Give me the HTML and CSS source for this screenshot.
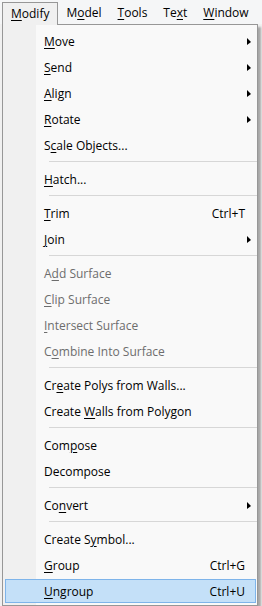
FILE: index.html
```html
<!DOCTYPE html>
<html>

<head>
  <meta charset="UTF-8">
  <meta name="viewport" content="width=device-width, initial-scale=1.0">
  <title>Modify menu</title>

  <link rel="stylesheet" href="styles.css">
</head>

<body>
  <div class="menubar">
    <div class="top open"><u>M</u>odify</div>
    <div class="top">M<u>o</u>del</div>
    <div class="top"><u>T</u>ools</div>
    <div class="top">Te<u>x</u>t</div>
    <div class="top"><u>W</u>indow</div>
  </div>

  <div class="menu">
    <div class="item"><span class="label"><u>M</u>ove</span><span class="arrow"></span></div>
    <div class="item"><span class="label"><u>S</u>end</span><span class="arrow"></span></div>
    <div class="item"><span class="label"><u>A</u>lign</span><span class="arrow"></span></div>
    <div class="item"><span class="label"><u>R</u>otate</span><span class="arrow"></span></div>
    <div class="item"><span class="label">S<u>c</u>ale Objects...</span></div>
    <div class="sep"></div>
    <div class="item"><span class="label"><u>H</u>atch...</span></div>
    <div class="sep"></div>
    <div class="item"><span class="label"><u>T</u>rim</span><span class="key">Ctrl+T</span></div>
    <div class="item"><span class="label"><u>J</u>oin</span><span class="arrow"></span></div>
    <div class="sep"></div>
    <div class="item off"><span class="label">A<u>d</u>d Surface</span></div>
    <div class="item off"><span class="label"><u>C</u>lip Surface</span></div>
    <div class="item off"><span class="label"><u>I</u>ntersect Surface</span></div>
    <div class="item off"><span class="label">C<u>o</u>mbine Into Surface</span></div>
    <div class="sep"></div>
    <div class="item"><span class="label">Cr<u>e</u>ate Polys from Walls...</span></div>
    <div class="item"><span class="label">Create <u>W</u>alls from Polygon</span></div>
    <div class="sep"></div>
    <div class="item"><span class="label">Com<u>p</u>ose</span></div>
    <div class="item"><span class="label">Decompose</span></div>
    <div class="sep"></div>
    <div class="item"><span class="label">Co<u>n</u>vert</span><span class="arrow"></span></div>
    <div class="sep"></div>
    <div class="item"><span class="label">Create S<u>y</u>mbol...</span></div>
    <div class="item"><span class="label"><u>G</u>roup</span><span class="key">Ctrl+G</span></div>
    <div class="item hot"><span class="label"><u>U</u>ngroup</span><span class="key">Ctrl+U</span></div>
  </div>
</body>

</html>
```

FILE: styles.css
```css
* {
  box-sizing: border-box;
}

body {
  margin: 0;
  font-family: "Open Sans", "Noto Sans", sans-serif;
  font-size: 12px;
  color: #000;
  background: #f0f0f0;
  overflow: hidden;
}

u {
  text-decoration-thickness: 1px;
  text-underline-offset: 2px;
}

.menubar {
  display: flex;
  height: 24px;
  padding: 2px 0 0 2px;
  background: #f5f6f7;
}

.top {
  height: 22px;
  line-height: 22px;
  padding: 0 8px;
}

.top.open {
  position: relative;
  z-index: 2;
  height: 23px;
  border: 1px solid #979797;
  border-bottom: none;
  background: #f0f0f0;
}

.menu {
  position: relative;
  display: flex;
  flex-direction: column;
  width: 256px;
  margin-left: 2px;
  padding: 3px 0 1px;
  border: 1px solid #979797;
  background: linear-gradient(to right, #f0f0f0 33px, #f9f9f9 33px);
  box-shadow: 3px 3px 2px rgba(0, 0, 0, 0.3);
}

.item {
  display: flex;
  align-items: center;
  flex: none;
  height: 24px;
  margin: 1px 1px 1px 2px;
  padding: 0 10px 0 38px;
  border: 1px solid transparent;
}

.label {
  flex: 1;
}

.arrow {
  width: 0;
  height: 0;
  margin-right: -6px;
  border-left: 4px solid #000;
  border-top: 4px solid transparent;
  border-bottom: 3px solid transparent;
}

.off {
  color: #6d6d6d;
}

.hot {
  background: #c4e0f8;
  border-color: #7eb4ea;
}

.sep {
  flex: none;
  height: 8px;
  margin-left: 46px;
  padding-top: 3px;
}

.sep:before {
  content: "";
  display: block;
  height: 1px;
  background: #d7d7d7;
}
```
